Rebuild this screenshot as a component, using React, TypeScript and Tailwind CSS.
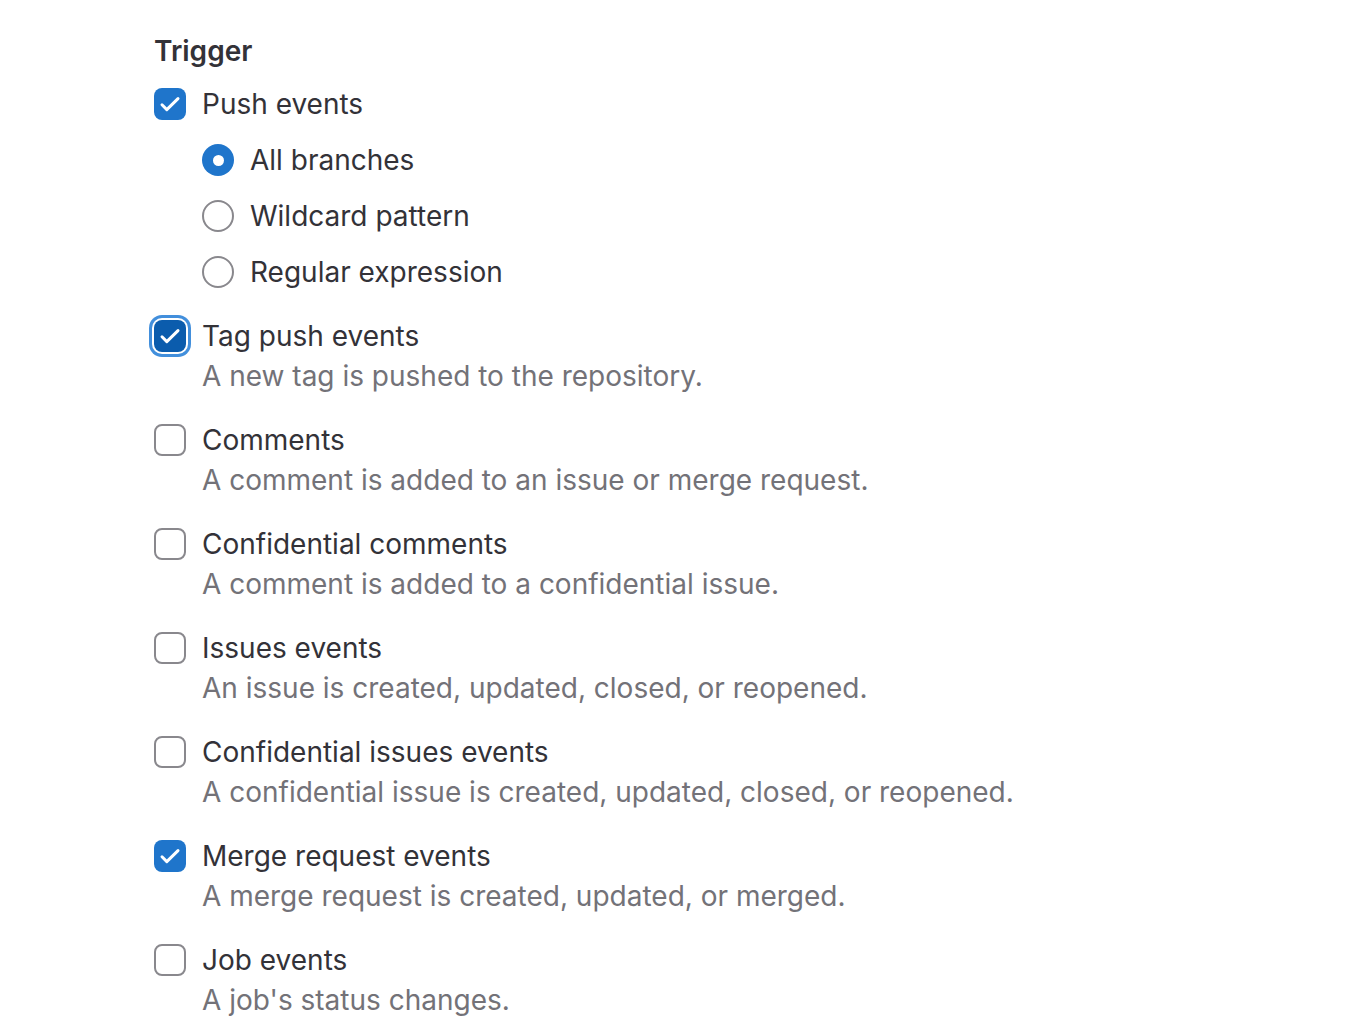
import React from "react";

const Check = () => (
  <svg width="32" height="32" viewBox="0 0 32 32" fill="none">
    <path d="M8 16.8l4.8 4.8L24 10.6" stroke="white" strokeWidth="3" strokeLinecap="round" strokeLinejoin="round" />
  </svg>
);

function Checkbox({ checked, focused }: { checked?: boolean; focused?: boolean }) {
  if (checked && focused) {
    return (
      <div className="mt-1 w-8 h-8 shrink-0 rounded-[8px] bg-[#0b5cad] flex items-center justify-center shadow-[0_0_0_2px_#fff,0_0_0_5px_#428fdc]">
        <Check />
      </div>
    );
  }
  if (checked) {
    return (
      <div className="mt-1 w-8 h-8 shrink-0 rounded-[8px] bg-[#1f75cb] flex items-center justify-center">
        <Check />
      </div>
    );
  }
  return <div className="mt-1 w-8 h-8 shrink-0 rounded-[8px] border-2 border-[#89888d] bg-white" />;
}

function Radio({ checked }: { checked?: boolean }) {
  if (checked) {
    return (
      <div className="w-8 h-8 shrink-0 rounded-full bg-[#1f75cb] flex items-center justify-center">
        <div className="w-[11px] h-[11px] rounded-full bg-white" />
      </div>
    );
  }
  return <div className="w-8 h-8 shrink-0 rounded-full border-2 border-[#89888d] bg-white" />;
}

const items = [
  { label: "Tag push events", desc: "A new tag is pushed to the repository.", checked: true, focused: true },
  { label: "Comments", desc: "A comment is added to an issue or merge request." },
  { label: "Confidential comments", desc: "A comment is added to a confidential issue." },
  { label: "Issues events", desc: "An issue is created, updated, closed, or reopened." },
  { label: "Confidential issues events", desc: "A confidential issue is created, updated, closed, or reopened." },
  { label: "Merge request events", desc: "A merge request is created, updated, or merged.", checked: true },
  { label: "Job events", desc: "A job's status changes." },
];

export default function App() {
  return (
    <div
      className="w-[1354px] h-[1036px] bg-white overflow-hidden pl-[154px] pt-[31px] text-[28px] leading-[40px] text-[#333238]"
      style={{ fontFamily: "Inter, 'Noto Sans', sans-serif" }}
    >
      <div className="font-semibold mb-[13px]">Trigger</div>
      <div className="flex gap-4">
        <Checkbox checked />
        <div>Push events</div>
      </div>
      <div className="pl-12 mt-4 flex flex-col gap-4">
        <div className="flex items-center gap-4">
          <Radio checked />
          <div>All branches</div>
        </div>
        <div className="flex items-center gap-4">
          <Radio />
          <div>Wildcard pattern</div>
        </div>
        <div className="flex items-center gap-4">
          <Radio />
          <div>Regular expression</div>
        </div>
      </div>
      <div className="mt-6 flex flex-col gap-6">
        {items.map((it) => (
          <div key={it.label} className="flex gap-4">
            <Checkbox checked={it.checked} focused={it.focused} />
            <div>
              <div>{it.label}</div>
              <div className="text-[#737278]">{it.desc}</div>
            </div>
          </div>
        ))}
      </div>
    </div>
  );
}
